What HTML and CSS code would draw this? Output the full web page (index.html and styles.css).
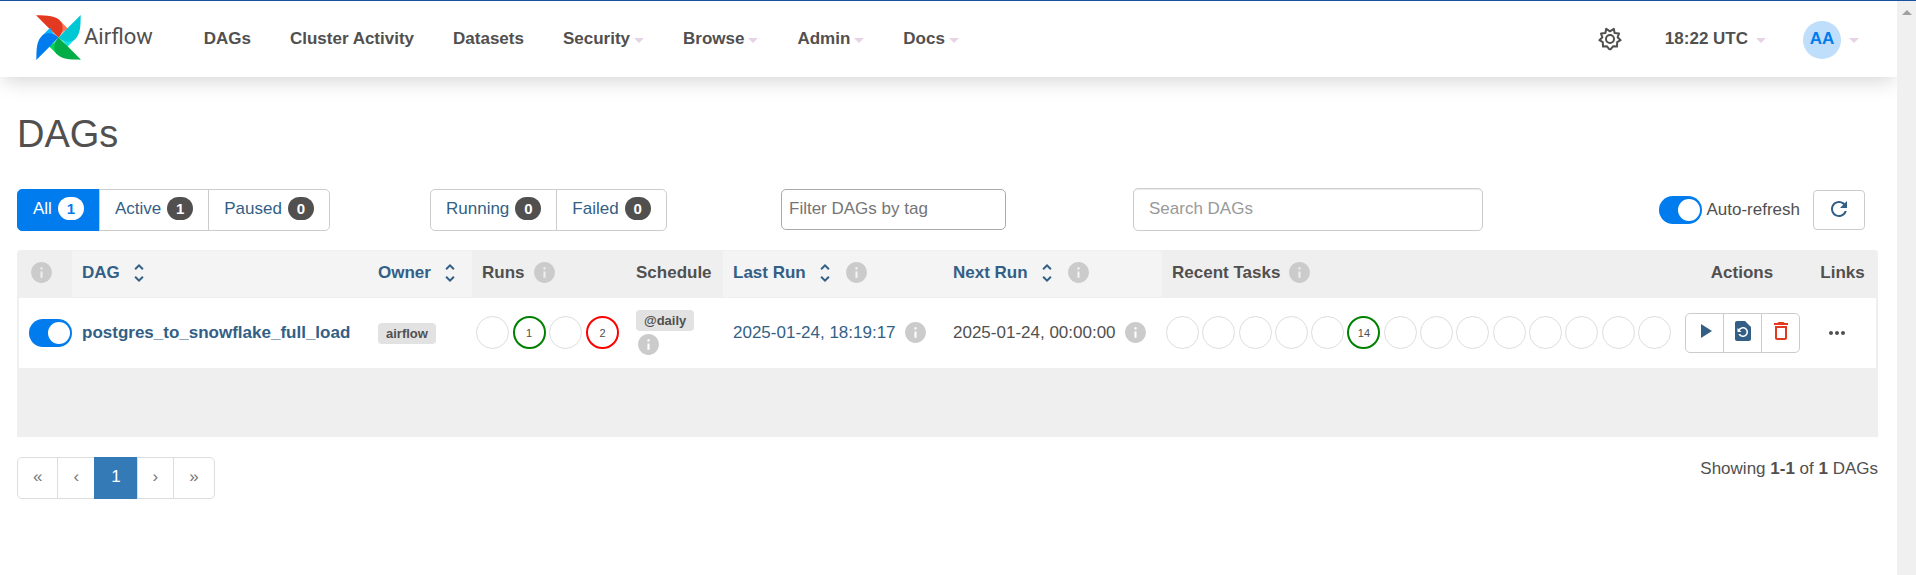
FILE: index.html
```
<!DOCTYPE html>
<html lang="en">
<head>
<meta charset="utf-8">
<title>DAGs - Airflow</title>
<link rel="stylesheet" href="styles.css">
</head>
<body>
<svg class="sprite" aria-hidden="true">
  <symbol id="info" viewBox="0 0 24 24"><path d="M12 2C6.48 2 2 6.48 2 12s4.48 10 10 10 10-4.48 10-10S17.52 2 12 2zm1 15h-2v-6h2v6zm0-8h-2V7h2v2z"/></symbol>
  <symbol id="sort" viewBox="0 0 24 24"><path d="M12 5.83L15.17 9l1.41-1.41L12 3 7.41 7.59 8.83 9 12 5.83zm0 12.34L8.83 15l-1.41 1.41L12 21l4.59-4.59L15.17 15 12 18.17z"/></symbol>
</svg>
<div class="page">
  <header class="navbar">
    <a class="brand" href="#">
      <svg class="logo" viewBox="0 0 134 134" aria-hidden="true">
        <g><path fill="#ff7557" d="M70 16L96 42C86 46 73 55 67 67Z"/><path fill="#e43921" d="M0 1C34 1 60 2 74 20C84 34 79 54 67 67L40 41Z"/></g>
        <g transform="rotate(90 67 67)"><path fill="#11e1ee" d="M70 16L96 42C86 46 73 55 67 67Z"/><path fill="#00c7d4" d="M0 1C34 1 60 2 74 20C84 34 79 54 67 67L40 41Z"/></g>
        <g transform="rotate(180 67 67)"><path fill="#04d659" d="M70 16L96 42C86 46 73 55 67 67Z"/><path fill="#00ad46" d="M0 1C34 1 60 2 74 20C84 34 79 54 67 67L40 41Z"/></g>
        <g transform="rotate(270 67 67)"><path fill="#0cb6ff" d="M70 16L96 42C86 46 73 55 67 67Z"/><path fill="#017cee" d="M0 1C34 1 60 2 74 20C84 34 79 54 67 67L40 41Z"/></g>
      </svg>
      <span>Airflow</span>
    </a>
    <nav class="menu">
      <a href="#">DAGs</a>
      <a href="#">Cluster Activity</a>
      <a href="#">Datasets</a>
      <a href="#">Security<i class="caret"></i></a>
      <a href="#">Browse<i class="caret"></i></a>
      <a href="#">Admin<i class="caret"></i></a>
      <a href="#">Docs<i class="caret"></i></a>
    </nav>
    <div class="user-area">
      <button class="plain" aria-label="Settings"><svg class="gear" viewBox="0 0 24 24"><path d="M8.2 1.8L12 4.3L15.8 1.8L16.6 6L21 6.6L19.6 10.3L22.6 13.2L19.2 15.2L19 19.6L15.2 19.2L12.8 22.2H11.2L8.8 19.2L5 19.6L4.8 15.2L1.4 13.2L4.4 10.3L3 6.6L7.4 6Z"/><circle cx="12" cy="12" r="4"/></svg></button>
      <a class="clock" href="#">18:22 UTC<i class="caret"></i></a>
      <a class="user" href="#"><span class="avatar">AA</span><i class="caret"></i></a>
    </div>
  </header>
  <main>
    <h1>DAGs</h1>
    <div class="toolbar">
      <div class="group">
        <a class="btn active" href="#">All <span class="badge">1</span></a>
        <a class="btn" href="#">Active <span class="badge">1</span></a>
        <a class="btn" href="#">Paused <span class="badge">0</span></a>
      </div>
      <div class="group">
        <a class="btn" href="#">Running <span class="badge">0</span></a>
        <a class="btn" href="#">Failed <span class="badge">0</span></a>
      </div>
      <input class="tag-filter" type="text" placeholder="Filter DAGs by tag" aria-label="Filter DAGs by tag">
      <input class="search" type="search" placeholder="Search DAGs" aria-label="Search DAGs">
      <div class="refresh">
        <label><input class="switch" type="checkbox" checked>Auto-refresh</label>
        <button class="btn-refresh" aria-label="Refresh"><svg class="icon" viewBox="0 0 24 24"><path d="M17.65 6.35C16.2 4.9 14.21 4 12 4c-4.42 0-7.99 3.58-7.99 8s3.57 8 7.99 8c3.73 0 6.84-2.55 7.73-6h-2.08c-.82 2.33-3.04 4-5.65 4-3.31 0-6-2.69-6-6s2.69-6 6-6c1.66 0 3.14.69 4.22 1.78L13 11h7V4l-2.35 2.35z"/></svg></button>
      </div>
    </div>
    <div class="table-wrap">
      <table>
        <colgroup>
          <col class="c-toggle"><col class="c-dag"><col class="c-owner"><col class="c-runs"><col class="c-schedule"><col class="c-last"><col class="c-next"><col class="c-tasks"><col class="c-actions"><col class="c-links">
        </colgroup>
        <thead>
          <tr>
            <th class="center"><svg class="info"><use href="#info"/></svg></th>
            <th class="sortable"><a class="line" href="#">DAG<svg class="icon sort"><use href="#sort"/></svg></a></th>
            <th class="sortable"><a class="line" href="#">Owner<svg class="icon sort"><use href="#sort"/></svg></a></th>
            <th><span class="line">Runs<svg class="info"><use href="#info"/></svg></span></th>
            <th>Schedule</th>
            <th class="sortable"><span class="line"><a class="line" href="#">Last Run<svg class="icon sort"><use href="#sort"/></svg></a><svg class="info"><use href="#info"/></svg></span></th>
            <th class="sortable"><span class="line"><a class="line" href="#">Next Run<svg class="icon sort"><use href="#sort"/></svg></a><svg class="info"><use href="#info"/></svg></span></th>
            <th><span class="line">Recent Tasks<svg class="info"><use href="#info"/></svg></span></th>
            <th class="center">Actions</th>
            <th class="center">Links</th>
          </tr>
        </thead>
        <tbody>
          <tr>
            <td><input class="switch" type="checkbox" checked aria-label="Unpause postgres_to_snowflake_full_load"></td>
            <td><a class="dag" href="#">postgres_to_snowflake_full_load</a></td>
            <td><a class="label" href="#">airflow</a></td>
            <td class="dots runs"><div class="circles"><span></span><span class="success">1</span><span></span><span class="failed">2</span></div></td>
            <td class="schedule"><a class="label" href="#">@daily</a><svg class="info"><use href="#info"/></svg></td>
            <td><span class="line"><a href="#">2025-01-24, 18:19:17</a><svg class="info"><use href="#info"/></svg></span></td>
            <td><span class="line">2025-01-24, 00:00:00<svg class="info"><use href="#info"/></svg></span></td>
            <td class="dots"><div class="circles"><span></span><span></span><span></span><span></span><span></span><span class="success">14</span><span></span><span></span><span></span><span></span><span></span><span></span><span></span><span></span></div></td>
            <td><div class="group">
              <button class="act" aria-label="Trigger DAG"><svg class="icon" viewBox="0 0 24 24"><path d="M8 5v14l11-7z"/></svg></button>
              <button class="act" aria-label="Reparse DAG"><svg class="icon" viewBox="0 0 24 24"><path d="M14 2H6c-1.1 0-1.99.9-1.99 2L4 20c0 1.1.89 2 1.99 2H18c1.1 0 2-.9 2-2V8l-6-6zm-2 16c-2.05 0-3.81-1.24-4.58-3h1.71c.63.9 1.68 1.5 2.87 1.5 1.93 0 3.5-1.57 3.5-3.5S13.93 9.5 12 9.5c-1.35 0-2.52.78-3.1 1.9l1.6 1.6h-4V9l1.3 1.3C8.69 8.92 10.23 8 12 8c2.76 0 5 2.24 5 5s-2.24 5-5 5z"/></svg></button>
              <button class="act danger" aria-label="Delete DAG"><svg class="icon" viewBox="0 0 24 24"><path d="M6 19c0 1.1.9 2 2 2h8c1.1 0 2-.9 2-2V7H6v12zM8 9h8v10H8V9zm7.5-5l-1-1h-5l-1 1H5v2h14V4z"/></svg></button>
            </div></td>
            <td class="links"><button class="plain" aria-label="Links"><svg class="icon" viewBox="0 0 24 24"><path d="M6 10c-1.1 0-2 .9-2 2s.9 2 2 2 2-.9 2-2-.9-2-2-2zm12 0c-1.1 0-2 .9-2 2s.9 2 2 2 2-.9 2-2-.9-2-2-2zm-6 0c-1.1 0-2 .9-2 2s.9 2 2 2 2-.9 2-2-.9-2-2-2z"/></svg></button></td>
          </tr>
        </tbody>
      </table>
    </div>
    <div class="footer">
      <nav class="pager" aria-label="Pages">
        <a href="#">«</a><a href="#">‹</a><a class="current" href="#">1</a><a href="#">›</a><a href="#">»</a>
      </nav>
      <p>Showing <strong>1-1</strong> of <strong>1</strong> DAGs</p>
    </div>
  </main>
</div>
<div class="scrollbar" aria-hidden="true"><i></i></div>
</body>
</html>
```
FILE: styles.css
```
* { box-sizing: border-box; }
body {
  margin: 0;
  min-height: 100vh;
  display: flex;
  background: #fff;
  color: #51504f;
  font: 17px/24px "Liberation Sans", Arial, sans-serif;
  border-top: 1px solid #17539a;
}
a { color: #335f86; text-decoration: none; }
button, input { font: inherit; color: inherit; }
svg { display: block; flex: none; }
.sprite { position: absolute; width: 0; height: 0; }
.page { flex: 1; min-width: 0; }
.scrollbar {
  width: 19px;
  background: #f0f0f0;
  position: relative;
  padding: 9px 5px;
}
.scrollbar i {
  display: block;
  border: solid transparent;
  border-width: 0 5px 5px;
  border-bottom-color: #a0a0a0;
}

.navbar {
  display: flex;
  align-items: center;
  height: 76px;
  padding: 0 38px 0 36px;
  background: #fff;
  box-shadow: 0 6px 20px -3px rgba(0, 0, 0, .18);
}
.brand {
  display: flex;
  align-items: center;
  gap: 3px;
  padding-bottom: 4px;
  color: #51504f;
  font: 22px/30px Roboto, sans-serif;
}
.logo { width: 45px; height: 45px; }
.menu { display: flex; gap: 39px; margin-left: 51px; }
.menu a, .clock {
  display: flex;
  align-items: center;
  color: #51504f;
  font-weight: bold;
}
.caret {
  border: solid transparent;
  border-width: 5px 5px 0;
  border-top-color: #e6d3e6;
  margin: 3px 0 0 4px;
}
.user-area { display: flex; align-items: center; margin-left: auto; }
.plain { display: inline-flex; padding: 0; border: 0; background: none; vertical-align: middle; }
.gear { width: 24px; height: 24px; fill: none; stroke: #51504f; stroke-width: 2; stroke-linejoin: round; }
.clock { margin: 0 37px 0 43px; }
.clock .caret, .user .caret { margin-left: 8px; }
.user { display: flex; align-items: center; padding-top: 2px; }
.avatar {
  width: 38px;
  height: 38px;
  border-radius: 50%;
  background: #bfdefb;
  color: #017cee;
  font-weight: bold;
  line-height: 36px;
  text-align: center;
}
.user .caret { margin-top: 0; }

main { padding: 36px 19px 20px 17px; }
h1 { margin: 0; font-size: 38px; font-weight: normal; line-height: 42px; }

.toolbar {
  display: grid;
  grid-template-columns: 413fr 351fr 352fr 350fr 395fr;
  align-items: center;
  margin: 33px 0 19px;
}
.group { display: flex; }
.btn {
  display: flex;
  align-items: center;
  gap: 6px;
  height: 42px;
  padding: 0 15px 2px;
  border: 1px solid #ccc;
  margin-left: -1px;
}
.group > :first-child { border-radius: 5px 0 0 5px; margin-left: 0; }
.group > :last-child { border-radius: 0 5px 5px 0; }
.badge {
  min-width: 26px;
  border-radius: 12px;
  background: #51504f;
  color: #fff;
  font-size: 15px;
  font-weight: bold;
  line-height: 23px;
  text-align: center;
}
.active { background: #017cee; border-color: #017cee; color: #fff; }
.active .badge { background: #fff; color: #017cee; }
.tag-filter, .search {
  border: 1px solid #aaa;
  border-radius: 5px;
  outline: 0;
  background: #fff;
}
.tag-filter { width: 225px; height: 41px; padding: 0 7px 2px; }
.tag-filter::placeholder { color: #757575; }
.search {
  height: 43px;
  padding: 0 15px 2px;
  border-color: #ccc;
  box-shadow: inset 0 1px 1px rgba(0, 0, 0, .08);
  appearance: none;
}
.search::placeholder { color: #999; }
.refresh { display: flex; align-items: center; justify-content: flex-end; gap: 13px; padding-right: 13px; }
.refresh label { display: flex; align-items: center; gap: 4px; }
.btn-refresh {
  padding: 6px 13px 8px;
  border: 1px solid #ccc;
  border-radius: 4px;
  background: #fff;
}
.icon { width: 24px; height: 24px; fill: #335f86; }
.switch {
  appearance: none;
  display: block;
  flex: none;
  width: 43px;
  height: 28px;
  margin: 0;
  padding: 3px 2px;
  border-radius: 14px;
  background: #017cee;
}
.switch::before {
  content: "";
  display: block;
  width: 22px;
  height: 22px;
  margin-left: auto;
  border-radius: 50%;
  background: #fff;
}

.table-wrap {
  border: 2px solid #efefef;
  border-top-width: 1px;
  border-bottom-width: 69px;
  border-radius: 4px 4px 0 0;
}
table { width: 100%; table-layout: fixed; border-collapse: collapse; }
.c-toggle { width: 53px; }
.c-dag { width: 296px; }
.c-owner { width: 104px; }
.c-runs { width: 154px; }
.c-schedule { width: 97px; }
.c-last { width: 220px; }
.c-next { width: 219px; }
.c-tasks { width: 513px; }
.c-actions { width: 134px; }
.c-links { width: 67px; }
th, td { padding: 0 0 0 10px; text-align: left; white-space: nowrap; }
th { height: 46px; padding-bottom: 2px; background: #efefef; border-bottom: 1px solid #efefef; }
th.sortable { background: #f4f4f4; }
td { height: 71px; }
th.center { padding: 0 0 2px; text-align: center; }
td.links { padding-left: 16px; }
.line { display: flex; align-items: center; }
.info { width: 25px; height: 25px; fill: #cbcbcb; margin-left: 5px; }
.line > .info { margin-left: 7px; }
th.center .info { margin: 0 auto 0 10px; }
.sort { margin-left: 7px; }
.dag { font-weight: bold; }
.label {
  display: inline-block;
  padding: 0 8px;
  border-radius: 4px;
  background: #e2e2e2;
  color: #51504f;
  font-size: 13px;
  font-weight: bold;
  line-height: 21px;
}
.schedule .info { margin-left: 0; }
td.dots { padding: 0 4px; }
td.runs { padding-right: 7px; }
.circles { display: flex; justify-content: space-between; align-items: center; }
.circles span {
  width: 33px;
  height: 33px;
  border: 1px solid #ddd;
  border-radius: 50%;
  font-size: 11px;
  line-height: 30px;
  text-align: center;
}
.circles .success { border: 2px solid #008000; }
.circles .failed { border: 2px solid #f00; }
.act {
  width: 39px;
  height: 40px;
  padding: 0 7px 4px;
  border: 1px solid #ccc;
  margin-left: -1px;
  background: #fff;
}
.danger .icon { fill: #e43921; }
.plain .icon { fill: #51504f; }

.footer { display: flex; justify-content: space-between; align-items: flex-start; margin-top: 20px; }
.footer p { margin: 0; }
.pager { display: flex; }
.pager a {
  height: 42px;
  padding: 0 15px;
  border: 1px solid #ddd;
  margin-left: -1px;
  color: #777;
  line-height: 38px;
}
.pager a:first-child { margin-left: 0; border-radius: 5px 0 0 5px; }
.pager a:last-child { border-radius: 0 5px 5px 0; }
.pager .current { padding: 0 16px; border-color: #337ab7; background: #337ab7; color: #fff; }
```
